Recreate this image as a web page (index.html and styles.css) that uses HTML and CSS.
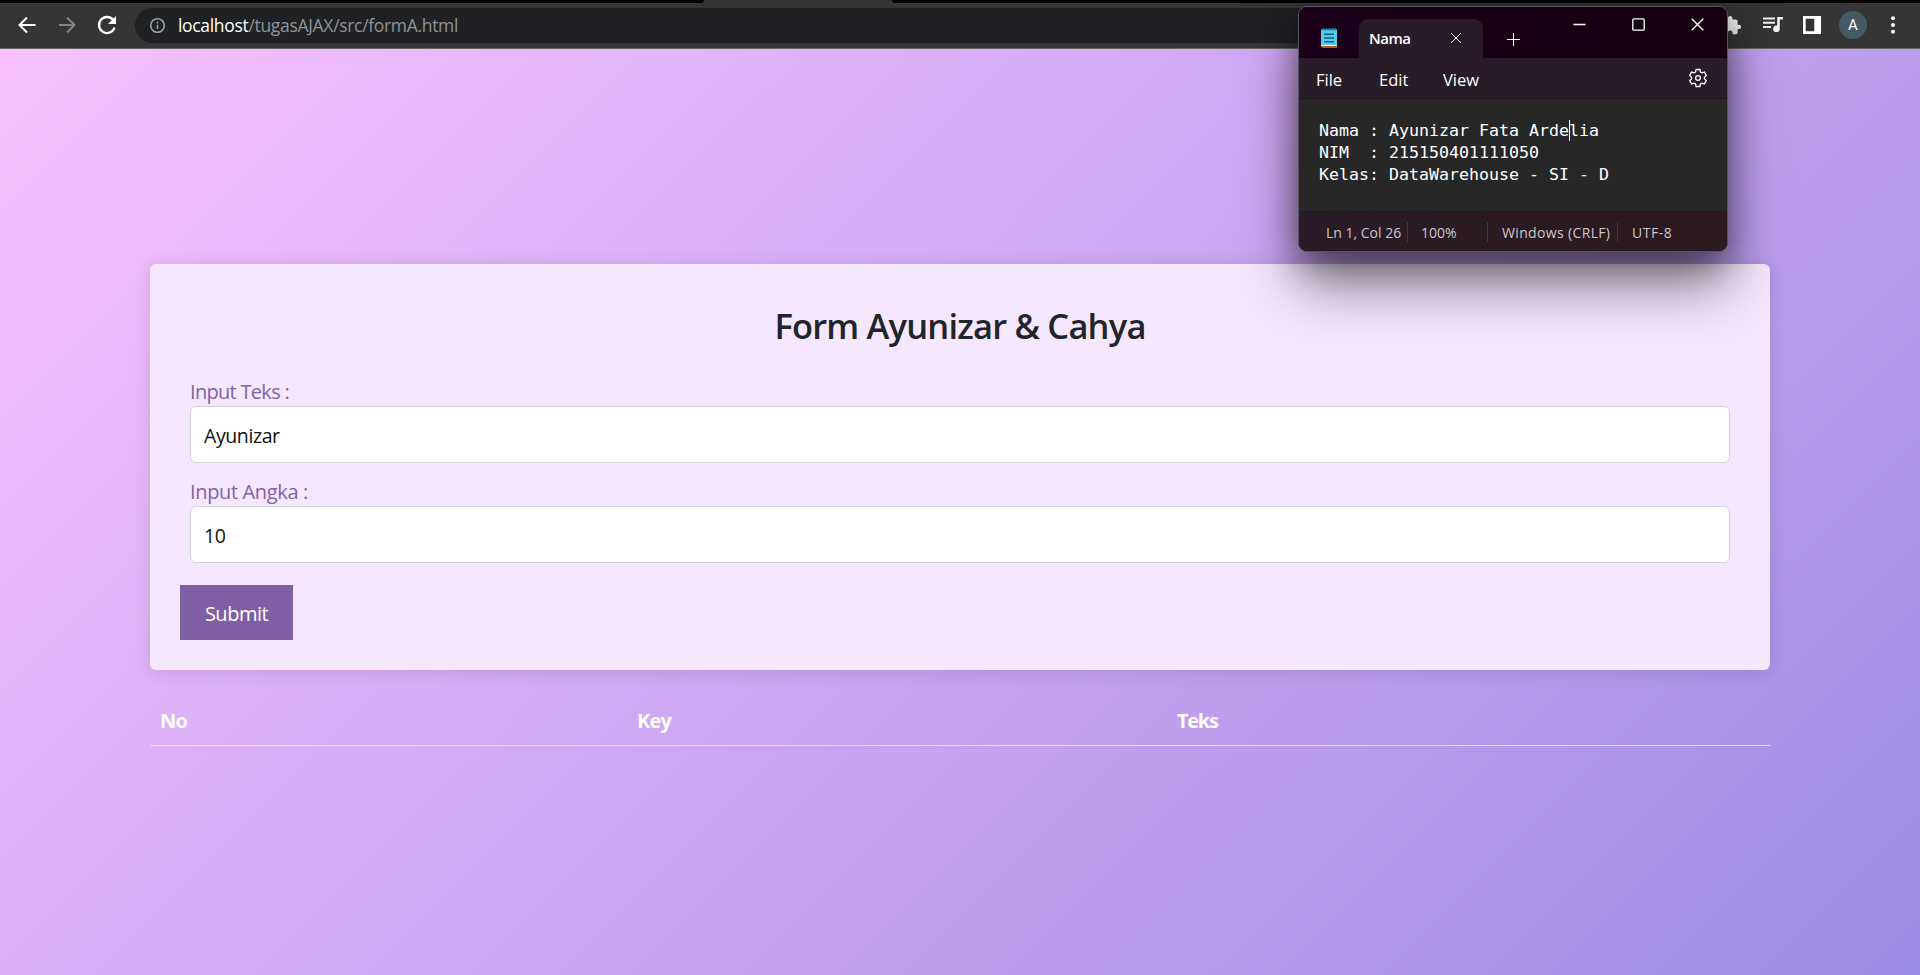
FILE: index.html
```
<!DOCTYPE html>
<html lang="id">
<head>
<meta charset="utf-8">
<title>Form Ayunizar &amp; Cahya</title>
<link rel="stylesheet" href="styles.css">
</head>
<body>
<header class="browser">
  <div class="tabstrip"><div class="active-tab"></div></div>
  <div class="toolbar">
    <svg class="nav-icon back" viewBox="0 0 24 24"><path d="M20.500 12H5M12 4.500 4.500 12l7.500 7.500"/></svg>
    <svg class="nav-icon forward" viewBox="0 0 24 24"><path d="M4 12h15M12 4.500 19.500 12 12 19.500"/></svg>
    <svg class="nav-icon reload" viewBox="0 0 24 24"><path d="M19.600 14.500A8 8 0 1 1 18 6.700L20 9"/><path class="solid" d="M21 3v8h-8z"/></svg>
    <div class="omnibox">
      <svg class="info" viewBox="0 0 18 18"><circle cx="9" cy="9" r="7.200"/><path d="M9 8.200v4.600M9 5v1.900"/></svg>
      <span class="url"><span class="host">localhost</span>/tugasAJAX/src/formA.html</span>
    </div>
    <div class="actions">
      <svg class="puzzle" viewBox="0 0 24 24"><path d="M20.500 11H19V7a2 2 0 0 0-2-2h-4V3.500a2.500 2.500 0 0 0-5 0V5H4a2 2 0 0 0-2 2v3.800h1.500a2.700 2.700 0 0 1 0 5.400H2V20a2 2 0 0 0 2 2h3.800v-1.500a2.700 2.700 0 0 1 5.400 0V22H17a2 2 0 0 0 2-2v-4h1.500a2.500 2.500 0 0 0 0-5z"/></svg>
      <svg class="queue" viewBox="0 0 20 18"><path class="line" d="M0 2.500h12M0 6.800h12M0 11.100h8"/><path d="M14.200 1H20v2.600h-3.200v9.200a3.300 3.300 0 1 1-2.600-3.200z"/></svg>
      <svg class="panel" viewBox="0 0 18 18"><path fill-rule="evenodd" d="M0 0h18v18H0zM2.700 2.700v12.600h8.600V2.700z"/></svg>
      <span class="avatar">A</span>
      <svg class="dots" viewBox="0 0 4 18"><circle cx="2" cy="2.200" r="2"/><circle cx="2" cy="9" r="2"/><circle cx="2" cy="15.800" r="2"/></svg>
    </div>
  </div>
</header>

<main class="page">
  <section class="card">
    <h2 class="title">Form Ayunizar &amp; Cahya</h2>
    <div class="field">
      <label class="label label-teks" for="teks">Input Teks :</label>
      <input class="control" id="teks" type="text" value="Ayunizar">
    </div>
    <div class="field">
      <label class="label" for="angka">Input Angka :</label>
      <input class="control" id="angka" type="text" value="10">
    </div>
    <button class="submit" type="button">Submit</button>
  </section>
  <div class="table-head">
    <span>No</span><span>Key</span><span class="th-teks">Teks</span>
  </div>
</main>

<aside class="notepad">
  <div class="np-titlebar">
    <svg class="np-logo" viewBox="0 0 16 20"><path fill="#5ac8e8" d="M0 1.500h16v16H0z"/><path fill="#eee" d="M0 17h16v1H0z"/><path fill="#b35a12" d="M0 18h16v2H1z"/><path stroke="#0b5f86" stroke-width="1.500" d="M3 6.200h10M3 10h10M3 13.800h10"/><path stroke="#1687ad" stroke-width="1.500" d="M2.500 0v2.500M5.500 0v2.500M8.500 0v2.500M11.500 0v2.500M14 0v2.500"/></svg>
    <div class="np-tab"><span>Nama</span><svg class="np-x" viewBox="0 0 12 12"><path d="M1 1l10 10M11 1 1 11"/></svg></div>
    <svg class="np-plus" viewBox="0 0 13 13"><path d="M6.500 0v13M0 6.500h13"/></svg>
    <div class="np-controls">
      <svg viewBox="0 0 13 13"><path d="M.5 6.500h12"/></svg>
      <svg viewBox="0 0 13 13"><rect x=".8" y=".8" width="11.400" height="11.400" rx="1"/></svg>
      <svg viewBox="0 0 13 13"><path d="M.7.7l11.600 11.600M12.300.7.7 12.300"/></svg>
    </div>
  </div>
  <div class="np-menu">
    <span class="m-file">File</span><span class="m-edit">Edit</span><span class="m-view">View</span>
    <svg class="gear" viewBox="0 0 20 20"><path d="M8.100 1.500h3.800l.6 2.600 1.300.8 2.600-.8 1.900 3.300-1.900 1.800v1.600l1.900 1.800-1.900 3.300-2.600-.8-1.300.8-.6 2.600H8.100l-.6-2.600-1.300-.8-2.600.8-1.900-3.300 1.900-1.800V9.200L1.700 7.400l1.900-3.300 2.600.8 1.300-.8z"/><circle cx="10" cy="10" r="2.400"/></svg>
  </div>
  <div class="np-text">
    <div class="line">Nama : Ayunizar Fata Arde<i class="caret"></i>lia</div>
    <div class="line">NIM  : 215150401111050</div>
    <div class="line">Kelas: DataWarehouse - SI - D</div>
  </div>
  <div class="np-status">
    <span class="s-pos">Ln 1, Col 26</span><span class="s-zoom">100%</span><span class="s-eol">Windows (CRLF)</span><span class="s-enc">UTF-8</span>
  </div>
</aside>
</body>
</html>
```

FILE: styles.css
```
* { box-sizing: border-box; }

body {
  margin: 0;
  height: 975px;
  display: flex;
  flex-direction: column;
  overflow: hidden;
  font-family: "Open Sans", "Noto Sans", sans-serif;
  position: relative;
}

/* Browser chrome */
.browser {
  height: 49px;
  background: #353535;
  border-bottom: 1px solid #66645f;
  flex: none;
}
.tabstrip { height: 3px; background: #000; padding-left: 703px; }
.active-tab { width: 190px; height: 3px; background: #353535; border-radius: 3px 3px 0 0; }
.toolbar { display: flex; align-items: center; height: 45px; padding: 0 15px 0 15px; }
.nav-icon { width: 24px; height: 24px; margin-right: 16px; margin-top: -1px; fill: none; stroke: #fff; stroke-width: 2; }
.forward { stroke: #858585; }
.reload { stroke-width: 2.300; }
.solid { fill: #fff; stroke: none; }
.omnibox {
  display: flex;
  align-items: center;
  flex: 1;
  height: 35px;
  margin: 0 20px 0 0;
  padding-left: 14px;
  border-radius: 18px;
  background: #202124;
}
.info { width: 17px; height: 17px; fill: none; stroke: #9aa0a6; stroke-width: 1.700; }
.url { margin: -1px 0 0 12px; font-size: 17.500px; color: #8f9397; white-space: nowrap; letter-spacing: -.32px; }
.host { color: #fff; }
.actions { display: flex; align-items: center; margin-top: -1px; fill: #f1f1f1; }
.puzzle { width: 21px; height: 21px; margin-right: 21px; }
.queue { width: 20px; height: 18px; margin-right: 20px; }
.queue .line { stroke: #f1f1f1; stroke-width: 2; }
.panel { width: 18px; height: 18px; margin-right: 18px; fill: #fff; }
.avatar {
  width: 28px;
  height: 28px;
  margin-right: 24px;
  border-radius: 50%;
  background: #455a64;
  color: #fff;
  font: 15px/28px Roboto, sans-serif;
  text-align: center;
}
.dots { width: 4px; height: 18px; margin-right: 10px; fill: #fff; }

/* Form page */
.page {
  flex: 1;
  padding: 215px 150px 0;
  background: linear-gradient(135deg, #f9c1ff, #9d8ce6);
}
.card {
  height: 406px;
  padding: 39px 40px 0;
  border-radius: 6px;
  background: #f4e7fe;
  box-shadow: 0 2px 18px rgba(0, 0, 0, .13);
}
.title {
  margin: 0 0 27px;
  font-size: 34.500px;
  line-height: 46px;
  font-weight: 600;
  letter-spacing: -.8px;
  color: #212529;
  text-align: center;
}
.field { height: 100px; }
.label { display: block; height: 30px; line-height: 32px; font-size: 20px; letter-spacing: -.35px; color: #8263a6; }
.label-teks { letter-spacing: -.7px; }
.control {
  display: block;
  width: 100%;
  height: 57px;
  padding: 1px 13px 0;
  border: 1px solid #ced4da;
  border-radius: 6px;
  background: #fff;
  color: #111;
  font: 19.500px "Open Sans", sans-serif;
  letter-spacing: -.4px;
}
.submit {
  display: block;
  width: 113px;
  height: 55px;
  margin: 9px 0 0 -10px;
  padding: 1px 0 0;
  border: 0;
  background: #7e5fa4;
  color: #fff;
  font: 20px "Open Sans", sans-serif;
  letter-spacing: -.5px;
}
.table-head {
  display: grid;
  grid-template-columns: 477px 540px 1fr;
  margin-top: 26px;
  height: 50px;
  padding: 10px 10px 0;
  border-bottom: 1px solid #e6dcf5;
  color: #fff;
  font-size: 20px;
  line-height: 30px;
  font-weight: 700;
  letter-spacing: -.8px;
}
.th-teks { letter-spacing: -1.300px; }

/* Notepad window floating over the page */
.notepad {
  position: absolute;
  left: 1298px;
  top: 6px;
  width: 430px;
  height: 246px;
  display: flex;
  flex-direction: column;
  overflow: hidden;
  border: 1px solid #57535a;
  border-radius: 9px;
  background: #291c29;
  color: #fff;
  box-shadow: 0 32px 56px rgba(0, 0, 0, .5), 0 8px 32px rgba(0, 0, 0, .35);
}
.notepad svg { fill: none; stroke: #fff; flex: none; }
.np-titlebar { display: flex; height: 51px; background: linear-gradient(90deg, #1a0019, #150010); }
.notepad .np-logo { width: 16px; height: 20px; margin: 21px 22px 0 22px; stroke: none; }
.np-tab {
  display: flex;
  align-items: center;
  width: 124px;
  height: 39px;
  margin-top: 12px;
  padding: 0 21px 0 10px;
  justify-content: space-between;
  border-radius: 9px 9px 0 0;
  background: #291c29;
  font-size: 15px;
  line-height: 18px;
  font-weight: 600;
}
.np-tab span { margin-top: -2px; letter-spacing: -.5px; }
.np-x { width: 12px; height: 12px; margin-top: -1px; }
.np-plus { width: 13px; height: 13px; margin: 26px 0 0 24px; }
.np-controls { display: flex; gap: 46px; margin: 11px 0 0 auto; padding-right: 23px; }
.np-controls svg { width: 13px; height: 13px; stroke-width: 1.300; }
.np-menu {
  display: flex;
  align-items: center;
  height: 41px;
  padding: 2px 19px 0 17px;
  border-bottom: 1px solid #211720;
  font-size: 16.500px;
}
.m-file { width: 63px; }
.m-edit { width: 64px; }
.notepad .gear { width: 20px; height: 20px; margin: -3px 0 0 auto; stroke-width: 1.300; }
.np-text {
  display: flex;
  flex-direction: column;
  height: 112px;
  padding: 21px 0 0 20px;
  background: #272727;
  font: 16.620px/22px "DejaVu Sans Mono", monospace;
}
.np-text .line { height: 22px; white-space: pre; }
.caret { display: inline-block; width: 1px; height: 21px; margin: -4px -1px -4px 0; background: #fff; vertical-align: -1px; }
.np-status {
  display: flex;
  align-items: center;
  flex: 1;
  padding-left: 27px;
  border-top: 1px solid #241a22;
  background: linear-gradient(90deg, #291b29, #2b1a20 50%);
  color: #cdc6ca;
  font-size: 14px;
  white-space: nowrap;
}
.np-status span { height: 20px; line-height: 22px; border-right: 1px solid #43363d; }
.np-status .s-pos { width: 82px; }
.np-status .s-zoom { width: 80px; padding-left: 13px; }
.np-status .s-eol { width: 130px; padding-left: 14px; letter-spacing: .35px; }
.np-status .s-enc { padding-left: 14px; border: 0; letter-spacing: .5px; }
```
